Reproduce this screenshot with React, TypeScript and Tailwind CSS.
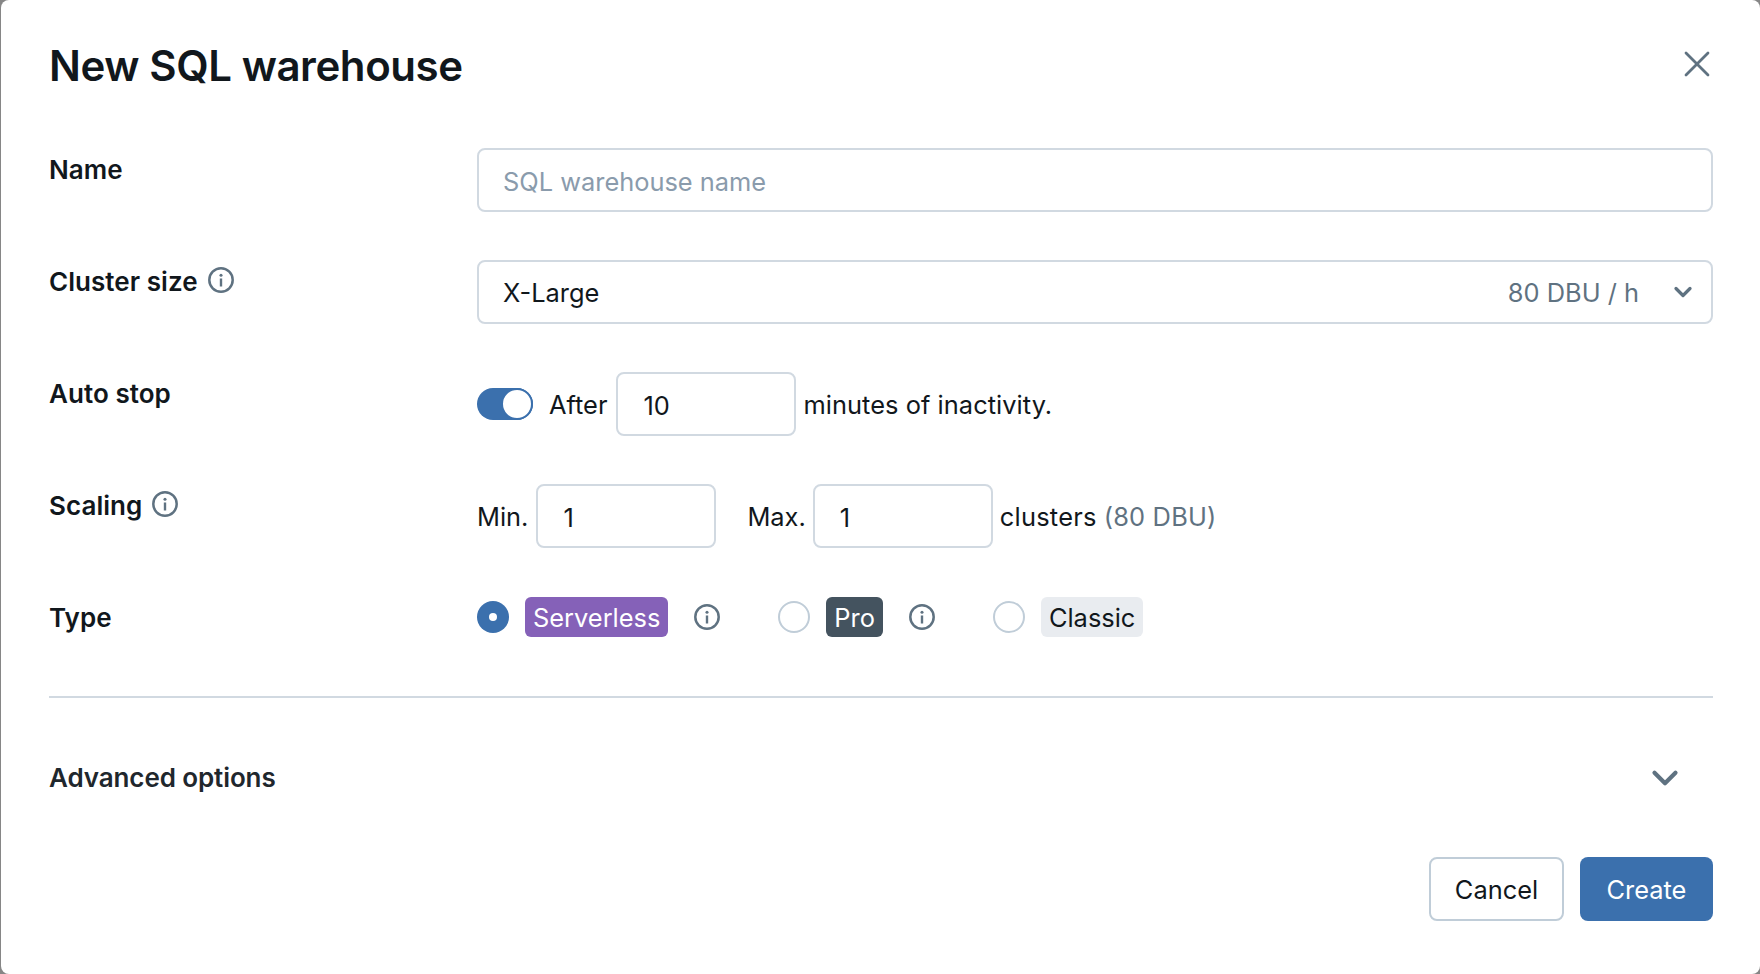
import React from 'react';
import { X, ChevronDown } from 'lucide-react';

function InfoIcon({ className }: { className?: string }) {
  return (
    <svg viewBox="0 0 24 24" fill="none" className={className}>
      <circle cx="12" cy="12" r="10.8" stroke="#5f7281" strokeWidth="2.3" />
      <circle cx="12" cy="7.6" r="1.4" fill="#5f7281" />
      <rect x="10.9" y="10.6" width="2.2" height="7.4" fill="#5f7281" />
    </svg>
  );
}

function FieldLabel({ children, info }: { children: React.ReactNode; info?: boolean }) {
  return (
    <div className="w-[428px] shrink-0 h-[42px] flex items-center text-[26px] font-semibold tracking-[0.05px] text-[#11171c]">
      {children}
      {info && <InfoIcon className="w-[26px] h-[26px] ml-[10px] -mt-[2px]" />}
    </div>
  );
}

function NumberBox({ value }: { value: string }) {
  return (
    <input
      readOnly
      value={value}
      className="w-[180px] h-[64px] pl-[25px] pr-[25px] pt-[2px] border-2 border-[#d1d9e1] rounded-[8px] outline-none text-[#11171c]"
    />
  );
}

function Radio({ checked }: { checked?: boolean }) {
  if (checked) {
    return (
      <span className="w-[32px] h-[32px] shrink-0 rounded-full bg-[#3b70ad] flex items-center justify-center">
        <span className="w-[8px] h-[8px] rounded-full bg-white" />
      </span>
    );
  }
  return <span className="block w-[32px] h-[32px] shrink-0 rounded-full border-2 border-[#c0cdd8] bg-white" />;
}

export default function App() {
  return (
    <div className="w-[1760px] h-[974px] bg-[#868686] overflow-hidden">
      <div
        className="ml-[1px] h-full bg-white rounded-[8px] pl-[48px] pr-[47px] text-[25.4px] text-[#11171c]"
        style={{ fontFamily: 'Inter, "Noto Sans", sans-serif' }}
      >
        {/* Header */}
        <div className="h-[148px] flex items-start justify-between">
          <h1 className="mt-[38px] text-[42px] leading-[56px] font-semibold tracking-[-0.42px]">New SQL warehouse</h1>
          <X className="mt-[42px] mr-[-6px] w-[44px] h-[44px] text-[#5f7281]" strokeWidth={1.5} />
        </div>

        <div className="flex flex-col gap-[48px]">
          {/* Name */}
          <div className="flex items-start">
            <FieldLabel>Name</FieldLabel>
            <input
              readOnly
              placeholder="SQL warehouse name"
              className="flex-1 h-[64px] px-[24px] pt-[2px] border-2 border-[#d1d9e1] rounded-[8px] outline-none placeholder:text-[#8a9bac]"
            />
          </div>

          {/* Cluster size */}
          <div className="flex items-start">
            <FieldLabel info>Cluster size</FieldLabel>
            <div className="flex-1 h-[64px] pl-[24px] pr-[14px] border-2 border-[#d1d9e1] rounded-[8px] flex items-center">
              <span className="flex-1 pt-[3px]">X-Large</span>
              <span className="pt-[3px] text-[#5f7281]">80 DBU / h</span>
              <ChevronDown className="ml-[30px] w-[28px] h-[28px] text-[#5f7281]" strokeWidth={2.8} />
            </div>
          </div>

          {/* Auto stop */}
          <div className="flex items-start">
            <FieldLabel>Auto stop</FieldLabel>
            <div className="flex items-center gap-[8px]">
              <span className="w-[56px] h-[32px] mr-[8px] rounded-full bg-[#3b70ad] flex justify-end">
                <span className="w-[32px] h-[32px] rounded-full bg-white border-2 border-[#3b70ad]" />
              </span>
              <span className="pt-[3px] mr-[1px]">After</span>
              <NumberBox value="10" />
              <span className="pt-[3px] ml-[-1px] tracking-[0.05px]">minutes of inactivity.</span>
            </div>
          </div>

          {/* Scaling */}
          <div className="flex items-start">
            <FieldLabel info>Scaling</FieldLabel>
            <div className="flex items-center gap-[8px]">
              <span className="pt-[3px]">Min.</span>
              <NumberBox value="1" />
              <span className="pt-[3px] ml-[23px] mr-[-1px]">Max.</span>
              <NumberBox value="1" />
              <span className="pt-[3px] ml-[-1px] tracking-[0.25px]">clusters</span>
              <span className="pt-[3px] ml-[-1px] tracking-[0.2px] text-[#5f7281]">(80 DBU)</span>
            </div>
          </div>

          {/* Type */}
          <div className="flex items-center">
            <FieldLabel>Type</FieldLabel>
            <div className="flex items-center">
              <Radio checked />
              <span className="ml-[16px] h-[40px] px-[8px] pt-[2px] rounded-[6px] bg-[#8561b8] text-white flex items-center">Serverless</span>
              <InfoIcon className="ml-[26px] w-[26px] h-[26px]" />
              <span className="block ml-[58px]"><Radio /></span>
              <span className="ml-[16px] h-[40px] px-[8px] pt-[2px] rounded-[6px] bg-[#44535f] text-white flex items-center">Pro</span>
              <InfoIcon className="ml-[26px] w-[26px] h-[26px]" />
              <span className="block ml-[58px]"><Radio /></span>
              <span className="ml-[16px] h-[40px] px-[8px] pt-[2px] rounded-[6px] bg-[#e9ecf0] flex items-center">Classic</span>
            </div>
          </div>
        </div>

        {/* Advanced options */}
        <div className="mt-[58px] border-t-2 border-[#d1d9e1] h-[161px] flex items-start justify-between">
          <span className="mt-[59px] h-[40px] flex items-center text-[26px] font-semibold tracking-[-0.1px] text-[#1f272d]">Advanced options</span>
          <ChevronDown className="mt-[59px] mr-[27px] w-[42px] h-[42px] text-[#5f7281]" strokeWidth={2.4} />
        </div>

        {/* Footer */}
        <div className="flex justify-end gap-[16px]">
          <button className="w-[135px] h-[64px] pt-[2px] border-2 border-[#c0cdd8] rounded-[8px] bg-white">Cancel</button>
          <button className="w-[133px] h-[64px] pt-[2px] rounded-[8px] bg-[#3b70ad] text-white">Create</button>
        </div>
      </div>
    </div>
  );
}
